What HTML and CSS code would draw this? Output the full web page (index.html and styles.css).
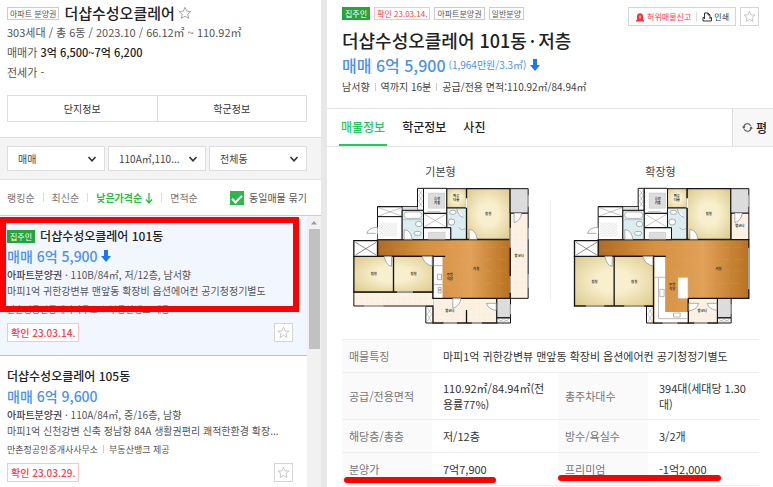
FILE: index.html
```
<!DOCTYPE html>
<html lang="ko">
<head>
<meta charset="utf-8">
<title>더샵수성오클레어</title>
<link rel="stylesheet" href="styles.css">
</head>
<body>

<svg class="defs" aria-hidden="true">
	<defs>
		<radialGradient id="room" r="0.75">
			<stop offset="0.3" stop-color="#f8efcd"/>
			<stop offset="1" stop-color="#d9c584"/>
		</radialGradient>
		<linearGradient id="wood" x1="0" x2="1">
			<stop offset="0" stop-color="#b06a22"/>
			<stop offset="0.35" stop-color="#d58f3f"/>
			<stop offset="0.7" stop-color="#e0a158"/>
			<stop offset="1" stop-color="#b8711f"/>
		</linearGradient>
		<pattern id="tile" width="16" height="16" patternUnits="userSpaceOnUse">
			<rect width="16" height="16" fill="#fcf2e4"/>
			<path d="M0 0H16M0 0V16" stroke="#efdfcb"/>
		</pattern>
		<pattern id="entry" width="8" height="8" patternUnits="userSpaceOnUse">
			<rect width="8" height="8" fill="#fff"/>
			<path d="M0 0L8 8M8 0L0 8" stroke="#ccc"/>
		</pattern>
		<symbol id="star" viewBox="0 0 16 16">
			<path d="M8 1.5l1.9 4.4 4.8.4-3.6 3.1 1.1 4.7L8 11.6l-4.2 2.5 1.1-4.7L1.3 6.3l4.8-.4z" fill="none" stroke="currentColor" stroke-linejoin="round"/>
		</symbol>
		<symbol id="chevron" viewBox="0 0 10 10">
			<path d="M1.5 3L5 6.8 8.500 3" fill="none" stroke="currentColor" stroke-width="1.6"/>
		</symbol>
		<symbol id="down" viewBox="0 0 10 12">
			<path d="M3 0h4v6h3L5 12 0 6h3z" fill="#1a78ea"/>
		</symbol>
		<!-- 두 평면도의 공통 부분 -->
		<g id="core">
			<path d="M232 87H250V153H232zM250 87H320V162H250zM250 162H320V205H250zM250 205H332V241H250z" fill="#fff" stroke="#151515" stroke-width="3"/>
			<path d="M236 92l11 17-11 17 11 17M247 92l-11 17 11 17-11 17" fill="none" stroke="#666"/>
			<path d="M252 164L318 203M318 164L252 203" stroke="#555"/>
			<path d="M265 101H314V147H265zM265 219H315V240H265z" fill="#ddd" stroke="#aaa"/>
			<path d="M320 88H379V146H320z" fill="url(#room)" stroke="#151515" stroke-width="3"/>
			<path d="M320 146H379V240H332V205H320z" fill="#dcedf1" stroke="#151515" stroke-width="3"/>
			<path d="M379 88H510V240H379z" fill="url(#room)" stroke="#151515" stroke-width="4"/>
			<path d="M510 88H564V161H510z" fill="#dcdcdc" stroke="#151515" stroke-width="3"/>
			<path d="M112 142H186V172H112z" fill="#fff" stroke="#151515" stroke-width="3"/>
			<path d="M116 145L184 170M184 145L116 170" stroke="#555"/>
			<path d="M112 142H232V153H186" fill="none" stroke="#151515" stroke-width="3"/>
			<path d="M188 143H232V152H188z" fill="#ddd"/>
			<path d="M112 172H186V241H112z" fill="#fff" stroke="#151515" stroke-width="3"/>
			<path d="M118 190H170V232H118z" fill="url(#entry)"/>
			<path d="M186 153H250V241H186z" fill="#dcedf1" stroke="#151515" stroke-width="3"/>
			<rect x="192" y="158" width="53" height="19" rx="8" fill="#fff" stroke="#999" stroke-width="2"/>
			<path d="M188 181H249" stroke="#aaa" stroke-width="2"/>
			<g fill="#fff" stroke="#888" stroke-width="2">
				<ellipse cx="236" cy="194" rx="10" ry="8"/>
				<ellipse cx="232" cy="222" rx="11" ry="6"/>
				<ellipse cx="334" cy="188" rx="10" ry="9"/>
				<ellipse cx="338" cy="159" rx="10" ry="6"/>
				<path d="M192 240V211Q212 212 216 240zM387 240V210Q408 212 411 240zM350 148Q353 170 370 174M356 205Q364 215 376 208"/>
				<path d="M112 204Q85 204 80 222H112z"/>
			</g>
			<path d="M41 244H112V291H41z" fill="#fff" stroke="#151515" stroke-width="4"/>
			<path d="M46 249L108 287M108 249L46 287" stroke="#555" stroke-width="2"/>
			<path d="M109 208V240M379 117V145" stroke="#fff" stroke-width="5"/>
			<path d="M262 158H300M564 108V142" stroke="#bbb" stroke-width="4"/>
			<g class="plan_name">
				<text x="291" y="123">승강</text><text x="291" y="134">기홀</text>
				<text x="348" y="114">파우</text><text x="348" y="125">더룸</text>
				<text x="444" y="168">침실</text>
			</g>
		</g>
	</defs>
</svg>

<div class="page">
	<div class="side">
		<div class="complex">
			<div class="complex_title">
				<span class="label">아파트 분양권</span>
				<h2>더샵수성오클레어</h2>
				<button class="fav_plain" aria-label="관심단지"><svg><use href="#star"/></svg></button>
			</div>
			<p class="complex_info">303세대 / 총 6동 / 2023.10 / 66.12㎡ ~ 110.92㎡</p>
			<p>매매가 <b>3억 6,500~7억 6,200</b></p>
			<p>전세가 -</p>
			<div class="complex_btns">
				<button>단지정보</button>
				<button>학군정보</button>
			</div>
		</div>

		<div class="filter">
			<div class="select"><select aria-label="거래유형"><option>매매</option></select><svg><use href="#chevron"/></svg></div>
			<div class="select"><select aria-label="면적"><option>110A㎡,110...</option></select><svg><use href="#chevron"/></svg></div>
			<div class="select"><select aria-label="동"><option>전체동</option></select><svg><use href="#chevron"/></svg></div>
		</div>

		<div class="sort">
			<a href="#">랭킹순</a>
			<a href="#">최신순</a>
			<a href="#" class="on">낮은가격순<svg viewBox="0 0 8 12"><path d="M4 1V11M1 7.500L4 11 7 7.500" fill="none" stroke="currentColor" stroke-width="1.3"/></svg></a>
			<a href="#">면적순</a>
			<label class="group"><input type="checkbox" checked>동일매물 묶기</label>
		</div>

		<div class="list_wrap">
			<div class="list">
				<div class="item item_on">
					<h3><span class="label label_owner">집주인</span>더샵수성오클레어 101동</h3>
					<p class="price">매매 6억 5,900<svg><use href="#down"/></svg></p>
					<p class="spec"><b>아파트분양권</b> · 110B/84㎡, 저/12층, 남서향</p>
					<p class="desc">마피1억 귀한강변뷰 맨앞동 확장비 옵션에어컨 공기청정기별도</p>
					<p class="agent"><span>만촌정공인중개사사무소</span><span>부동산뱅크 제공</span></p>
					<div class="item_foot">
						<span class="confirm">확인 23.03.14.</span>
						<button class="fav" aria-label="관심매물"><svg><use href="#star"/></svg></button>
					</div>
					<div class="mark"></div>
				</div>
				<div class="item">
					<h3>더샵수성오클레어 105동</h3>
					<p class="price">매매 6억 9,600</p>
					<p class="spec"><b>아파트분양권</b> · 110A/84㎡, 중/16층, 남향</p>
					<p class="desc">마피1억 신천강변 신축 정남향 84A 생활권편리 쾌적한환경 확장...</p>
					<p class="agent"><span>만촌정공인중개사사무소</span><span>부동산뱅크 제공</span></p>
					<div class="item_foot">
						<span class="confirm">확인 23.03.29.</span>
						<button class="fav" aria-label="관심매물"><svg><use href="#star"/></svg></button>
					</div>
				</div>
			</div>
			<div class="scroll">
				<svg viewBox="0 0 14 13"><path d="M4 8.500L7 5l3 3.500z" fill="#999"/></svg>
				<div class="thumb"></div>
			</div>
		</div>
	</div>

	<div class="detail">
		<div class="head">
			<div class="head_top">
				<span class="label label_owner">집주인</span>
				<span class="label label_red">확인 23.03.14.</span>
				<span class="label">아파트분양권</span>
				<span class="label">일반분양</span>
				<div class="tools">
					<button class="report"><svg viewBox="0 0 10 10"><path d="M1 9.500V8h1V4.500a3 3.200 0 0 1 6 0V8h1v1.500z" fill="#f5333f"/><path d="M5 3.500v3" stroke="#fff"/></svg>허위매물신고</button>
					<button><svg viewBox="0 0 10 10"><path d="M2.500 7V1h3.500l2 2v4M6 1v2h2M2.500 5.500H1v3.500h8.500V5.500H8" fill="none" stroke="#333"/></svg>인쇄</button>
				</div>
				<button class="fav" aria-label="관심매물"><svg><use href="#star"/></svg></button>
			</div>
			<h1>더샵수성오클레어 101동<i>·</i>저층</h1>
			<p class="head_price"><b>매매 6억 5,900</b> <span>(1,964만원/3.3㎡)</span><svg><use href="#down"/></svg></p>
			<p class="head_info"><span>남서향</span><span>역까지 16분</span><span>공급/전용 면적:110.92㎡/84.94㎡</span></p>
		</div>

		<div class="tabs">
			<a href="#" class="on">매물정보</a>
			<a href="#">학군정보</a>
			<a href="#">사진</a>
			<button class="unit"><svg viewBox="0 0 12 12"><path d="M2 5.500A4 4 0 0 1 9.500 4M10 6.500A4 4 0 0 1 2.500 8" fill="none" stroke="#555" stroke-width="1.200"/><path d="M0 5h4L2 7.500zM8 7h4L10 4.500z" fill="#555"/></svg>평</button>
		</div>

		<div class="plans">
			<div class="plan">
				<h4>기본형</h4>
				<svg viewBox="30 80 545 420">
					<path d="M510 161H564V417H510z" fill="url(#tile)" stroke="#151515" stroke-width="3"/>
					<path d="M41 398H278V440H41z" fill="url(#tile)" stroke="#151515" stroke-width="3"/>
					<path d="M278 417H470V491H278z" fill="url(#tile)" stroke="#151515" stroke-width="4"/>
					<path d="M257 441H278V491H257z" fill="#fff" stroke="#151515" stroke-width="3"/>
					<path d="M261 445l13 20-13 22M274 445l-13 20 13 22" fill="none" stroke="#666"/>
					<path d="M470 417H511V475H470z" fill="#dcdcdc" stroke="#151515" stroke-width="3"/>
					<path d="M470 476H511V491H470z" fill="#fff" stroke="#151515" stroke-width="3"/>
					<path d="M474 480l16 8 16-8M474 488l16-8 16 8" fill="none" stroke="#666"/>
					<path d="M278 398V438" stroke="#fcf2e4" stroke-width="5"/>
					<path d="M112 241H510V417H278V291H112z" fill="url(#wood)" stroke="#151515" stroke-width="4"/>
					<path d="M320 265H500M120 272H300M310 300H500M310 335H500M310 372H500" stroke="#e9b470" stroke-dasharray="26 14" opacity="0.6"/>
					<path d="M41 291H160V398H41zM160 291H278V398H160z" fill="url(#room)" stroke="#151515" stroke-width="4"/>
					<path d="M281 293H307V415H281z" fill="#fff"/>
					<path d="M281 319H307M281 376H307M292 345H304V361H292zM294 384h9v7h-9zM294 393h9v8h-9z" fill="none" stroke="#888" stroke-width="2"/>
					<path d="M276 291H315M379 452V491" stroke="#151515" stroke-width="4"/>
					<use href="#core"/>
					<g fill="#fff" stroke="#888" stroke-width="2">
						<path d="M132 291H154V321Q137 318 132 291zM246 291H276V320Q252 314 246 291zM338 417H362Q360 440 338 447zM468 432V453Q444 450 439 432zM522 161H544Q542 184 522 190z"/>
					</g>
					<path d="M72 440H130M170 398H218M310 491H350M395 491H425M510 265V205M510 350V400M564 205V240M564 345V385M510 435V465" stroke="#bbb" stroke-width="4"/>
					<g class="plan_name">
						<text x="101" y="348">침실</text><text x="220" y="348">침실</text>
						<text x="408" y="333">거실</text><text x="329" y="351">주방</text><text x="329" y="362">식당</text>
						<text x="537" y="293">발코니</text><text x="329" y="457">발코니</text>
					</g>
				</svg>
			</div>
			<div class="plan_line"></div>
			<div class="plan">
				<h4>확장형</h4>
				<svg viewBox="28 80 545 420">
					<path d="M510 161H564V241H510z" fill="url(#tile)" stroke="#151515" stroke-width="3"/>
					<path d="M382 417H470V491H382z" fill="url(#tile)" stroke="#151515" stroke-width="4"/>
					<path d="M257 441H278V491H257z" fill="#fff" stroke="#151515" stroke-width="3"/>
					<path d="M261 445l13 20-13 22M274 445l-13 20 13 22" fill="none" stroke="#666"/>
					<path d="M470 417H511V475H470z" fill="#dcdcdc" stroke="#151515" stroke-width="3"/>
					<path d="M470 476H511V491H470z" fill="#fff" stroke="#151515" stroke-width="3"/>
					<path d="M474 480l16 8 16-8M474 488l16-8 16 8" fill="none" stroke="#666"/>
					<path d="M112 241H564V417H382V491H278V291H112z" fill="url(#wood)" stroke="#151515" stroke-width="4"/>
					<path d="M320 265H550M120 272H300M320 300H550M320 335H550M390 372H550M320 420H378" stroke="#e9b470" stroke-dasharray="26 14" opacity="0.6"/>
					<path d="M41 291H160V440H41zM160 291H278V440H160z" fill="url(#room)" stroke="#151515" stroke-width="4"/>
					<path d="M281 293H313V458H380V489H281z" fill="#fff"/>
					<path d="M281 354H313M293 356V478H380M297 390H310V412H297zM338 461h20v12h-20z" fill="none" stroke="#999" stroke-width="2"/>
					<path d="M352 355H381V417H352z" fill="#fff" stroke="#ccc"/>
					<path d="M276 291H315" stroke="#151515" stroke-width="4"/>
					<use href="#core"/>
					<g fill="#fff" stroke="#888" stroke-width="2">
						<path d="M132 291H154V321Q137 318 132 291zM246 291H276V320Q252 314 246 291zM384 432H413Q410 450 384 455zM468 432V453Q444 450 439 432zM522 161H544Q542 184 522 190z"/>
					</g>
					<path d="M75 440H130M190 440H250M305 491H350M400 491H440M564 265V390M510 435V465" stroke="#bbb" stroke-width="4"/>
					<g class="plan_name">
						<text x="101" y="370">침실</text><text x="220" y="370">침실</text>
						<text x="473" y="333">거실</text><text x="334" y="380">주방</text><text x="334" y="391">식당</text>
						<text x="537" y="203">발코니</text><text x="424" y="458">발코니</text>
					</g>
				</svg>
			</div>
		</div>

		<table class="info">
			<colgroup><col class="c_th"><col class="c_td"><col class="c_th"><col></colgroup>
			<tr>
				<th>매물특징</th>
				<td colspan="3">마피1억 귀한강변뷰 맨앞동 확장비 옵션에어컨 공기청정기별도</td>
			</tr>
			<tr>
				<th>공급/전용면적</th>
				<td>110.92㎡/84.94㎡(전용률77%)</td>
				<th>총주차대수</th>
				<td>394대(세대당 1.30대)</td>
			</tr>
			<tr>
				<th>해당층/총층</th>
				<td>저/12층</td>
				<th>방수/욕실수</th>
				<td>3/2개</td>
			</tr>
			<tr>
				<th class="underline">분양가</th>
				<td>7억7,900</td>
				<th class="underline underline_2">프리미엄</th>
				<td>-1억2,000</td>
			</tr>
		</table>
	</div>
</div>

</body>
</html>
```
FILE: styles.css
```
*{ margin: 0; padding: 0; box-sizing: border-box;}
body{
	height: 100vh;
	overflow: hidden;
	background: #fff;
	color: #555;
	font: 11px/16px "Noto Sans CJK KR", "Noto Sans", sans-serif;
}
button, select, input{ font: inherit; color: inherit;}
button{
	background: #fff;
	border: 0;
}
a{ color: inherit; text-decoration: none;}
svg{ display: block; flex: none;}
.defs{ position: absolute; width: 0; height: 0;}

.page{ display: flex; height: 100vh;}
.side{
	display: flex;
	flex-direction: column;
	flex: none;
	width: 327px;
	border-right: 6px solid #e8e8e8;
}
.detail{ flex: 1; min-width: 0;}

.label{
	flex: none;
	padding: 0 2px;
	border: 1px solid #ccc;
	background: #fff;
	color: #555;
	font-size: 8px;
	font-weight: 400;
	line-height: 11px;
}
.label_owner{
	border-color: #25a53b;
	background: #25a53b;
	color: #fff;
}
.label_red{ border-color: #fbc4c8; color: #f5414d;}
.fav{
	display: flex;
	align-items: center;
	justify-content: center;
	width: 19px;
	height: 19px;
	border: 1px solid #d5d5d5;
	color: #bbb;
}
.fav svg{ width: 13px; height: 13px;}

/* 단지 */
.complex{
	padding: 4px 14px 15px 7px;
	border-bottom: 1px solid #ddd;
	line-height: 20px;
}
.complex_title{
	display: flex;
	align-items: center;
	height: 18px;
}
.complex_title h2{
	margin: 0 3px 0 5px;
	color: #222;
	font-size: 15px;
	font-weight: 500;
}
.fav_plain{ color: #999;}
.fav_plain svg{ width: 14px; height: 14px;}
.complex b{ color: #222; font-weight: 500;}
.complex_btns{
	display: flex;
	margin-top: 13px;
	border: 1px solid #ddd;
}
.complex_btns button{
	flex: 1;
	height: 25px;
	color: #333;
	font-size: 10px;
}
.complex_btns button + button{ border-left: 1px solid #ddd;}

/* 필터 */
.filter{
	display: grid;
	grid-template-columns: 1fr 1fr 1fr;
	gap: 3px;
	padding: 8px 14px 8px 7px;
	border-bottom: 1px solid #e2e2e2;
	background: #f4f4f4;
}
.select{ position: relative;}
.select select{
	appearance: none;
	width: 100%;
	height: 25px;
	padding: 0 20px 0 10px;
	border: 1px solid #ddd;
	background: #fff;
	color: #444;
	font-size: 10px;
}
.select svg{
	position: absolute;
	top: 8px;
	right: 8px;
	width: 10px;
	height: 10px;
	color: #333;
	pointer-events: none;
}

.sort{
	display: flex;
	align-items: center;
	height: 36px;
	padding: 0 14px 0 7px;
	border-bottom: 1px solid #ccc;
	color: #777;
	font-size: 10px;
}
.sort a{ display: flex; align-items: center;}
.sort a + a::before{
	content: "";
	width: 1px;
	height: 9px;
	margin: 0 8px;
	background: #ddd;
}
.sort .on{ color: #1fbf3c; font-weight: 700;}
.sort a svg{ width: 8px; height: 12px; margin-left: 3px;}
.group{
	display: flex;
	align-items: center;
	gap: 5px;
	margin-left: auto;
	color: #555;
}
.group input{
	display: flex;
	justify-content: center;
	appearance: none;
	width: 14px;
	height: 14px;
	background: #2db84b;
}
.group input::after{
	content: "";
	width: 4px;
	height: 8px;
	margin-top: 2px;
	border: solid #fff;
	border-width: 0 2px 2px 0;
	transform: rotate(45deg);
}

/* 매물 목록 */
.list_wrap{
	display: flex;
	flex: 1;
	min-height: 0;
}
.list{ flex: 1; min-width: 0; overflow: hidden;}
.item{
	position: relative;
	padding: 11px 14px 13px 7px;
	border-bottom: 1px solid #a9c5ea;
	white-space: nowrap;
}
.item_on{ background: #f2f7ff;}
.item h3{
	display: flex;
	align-items: center;
	gap: 5px;
	color: #222;
	font-size: 12px;
	font-weight: 500;
	line-height: 18px;
}
.item .price{
	display: flex;
	align-items: center;
	gap: 3px;
	color: #4a93ea;
	font-size: 14px;
	font-weight: 500;
	line-height: 22px;
}
.price svg{ width: 10px; height: 12px;}
.spec, .desc{ font-size: 10px;}
.item b{ font-weight: 500; color: #444;}
.agent{
	display: flex;
	align-items: center;
	margin: 3px 0 5px;
	font-size: 9px;
}
.agent span + span::before,
.head_info span + span::before{
	content: "";
	display: inline-block;
	width: 1px;
	height: 8px;
	margin: 0 5px;
	background: #ccc;
}
.item_foot{
	display: flex;
	justify-content: space-between;
}
.confirm{
	padding: 0 3px;
	border: 1px solid #fbc4c8;
	background: #fff;
	color: #f5414d;
	font-size: 10px;
	font-weight: 500;
	line-height: 17px;
}
.mark{
	position: absolute;
	top: 1px;
	left: 0;
	right: 8px;
	height: 95px;
	border: 6px solid #f00;
}
.scroll{ width: 14px; background: #f1f1f1;}
.scroll svg{ height: 13px;}
.thumb{
	height: 120px;
	margin: 0 1px 0 2px;
	background: #c1c1c1;
}

/* 매물 상세 */
.head{ padding: 7px 14px 11px 15px;}
.head_top{
	display: flex;
	align-items: flex-start;
	gap: 4px;
	height: 19px;
}
.tools{
	display: flex;
	align-items: center;
	height: 19px;
	margin-left: auto;
	padding: 0 6px;
	border: 1px solid #d5d5d5;
}
.tools button{
	display: flex;
	align-items: center;
	gap: 2px;
	color: #333;
	font-size: 8px;
	line-height: 9px;
}
.tools svg{ width: 10px; height: 10px;}
.tools .report{
	margin-right: 5px;
	padding-right: 5px;
	border-right: 1px solid #ddd;
	color: #f5414d;
}
.head h1{
	margin-top: 1px;
	color: #222;
	font-size: 18px;
	font-weight: 500;
	line-height: 26px;
}
.head h1 i{ margin: 0 3px; font-style: normal;}
.head_price{
	display: flex;
	align-items: center;
	gap: 3px;
	color: #4a93ea;
	font-size: 10px;
	line-height: 24px;
}
.head_price b{ font-size: 16px; font-weight: 500;}
.head_price svg{ width: 10px; height: 12px;}
.head_info{
	display: flex;
	color: #444;
	font-size: 10px;
	line-height: 20px;
}

.tabs{
	display: flex;
	gap: 13px;
	height: 39px;
	padding-left: 12px;
	border-top: 1px solid #e5e5e5;
	border-bottom: 1px solid #e5e5e5;
	color: #222;
	font-size: 12px;
	font-weight: 500;
}
.tabs a{ padding: 0 2px; line-height: 35px;}
.tabs .on{
	border-bottom: 2px solid #1fc95b;
	color: #1fc95b;
}
.unit{
	display: flex;
	align-items: center;
	gap: 3px;
	width: 41px;
	margin-left: auto;
	padding-left: 9px;
	border-left: 1px solid #ddd;
	background: #f7f7f7;
}
.unit svg{ width: 11px; height: 11px;}

.plans{
	display: flex;
	align-items: center;
	padding: 14px 3px 0 4px;
}
.plan{
	flex: 1;
	display: flex;
	flex-direction: column;
	align-items: center;
}
.plan_line{
	width: 1px;
	height: 100px;
	background: #eee;
}
.plan h4{
	color: #444;
	font-size: 11px;
	font-weight: 400;
	line-height: 20px;
}
.plan svg{ width: 182px; height: 140px; margin: 5px 0 13px;}
.plan_name{
	fill: #222;
	font-size: 10px;
	font-weight: 700;
	text-anchor: middle;
}

.info{
	width: calc(100% - 29px);
	margin-left: 15px;
	border-collapse: collapse;
	table-layout: fixed;
}
.c_th{ width: 90px;}
.c_td{ width: 126px;}
.info th, .info td{
	position: relative;
	height: 33px;
	padding: 7px 11px;
	border-top: 1px solid #eee;
	border-bottom: 1px solid #eee;
	color: #333;
	font-weight: 400;
	text-align: left;
	word-break: break-all;
}
.info th{
	padding: 7px;
	background: #fafafa;
	color: #777;
}
.underline::after{
	content: "";
	position: absolute;
	left: 2px;
	bottom: 2px;
	z-index: 1;
	width: 152px;
	height: 6px;
	border-radius: 3px;
	background: #f00;
}
.underline_2::after{ left: 0; bottom: 4px; width: 163px;}
```
